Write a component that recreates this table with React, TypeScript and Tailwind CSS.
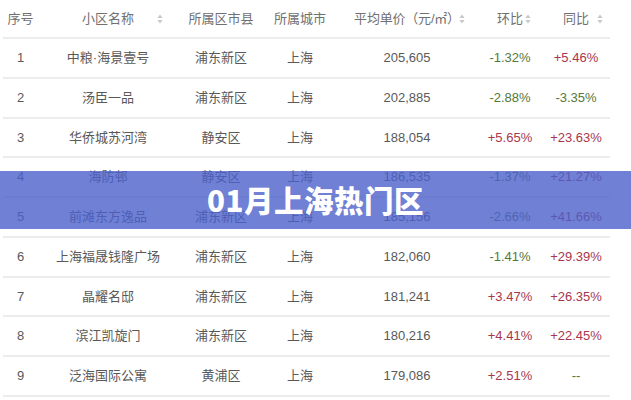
import React from "react";

type Row = {
  n: number;
  name: string;
  district: string;
  city: string;
  price: string;
  mom: string;
  yoy: string;
};

const rows: Row[] = [
  { n: 1, name: "中粮·海景壹号", district: "浦东新区", city: "上海", price: "205,605", mom: "-1.32%", yoy: "+5.46%" },
  { n: 2, name: "汤臣一品", district: "浦东新区", city: "上海", price: "202,885", mom: "-2.88%", yoy: "-3.35%" },
  { n: 3, name: "华侨城苏河湾", district: "静安区", city: "上海", price: "188,054", mom: "+5.65%", yoy: "+23.63%" },
  { n: 4, name: "海防邨", district: "静安区", city: "上海", price: "186,535", mom: "-1.37%", yoy: "+21.27%" },
  { n: 5, name: "前滩东方逸品", district: "浦东新区", city: "上海", price: "185,156", mom: "-2.66%", yoy: "+41.66%" },
  { n: 6, name: "上海福晟钱隆广场", district: "浦东新区", city: "上海", price: "182,060", mom: "-1.41%", yoy: "+29.39%" },
  { n: 7, name: "晶耀名邸", district: "浦东新区", city: "上海", price: "181,241", mom: "+3.47%", yoy: "+26.35%" },
  { n: 8, name: "滨江凯旋门", district: "浦东新区", city: "上海", price: "180,216", mom: "+4.41%", yoy: "+22.45%" },
  { n: 9, name: "泛海国际公寓", district: "黄浦区", city: "上海", price: "179,086", mom: "+2.51%", yoy: "--" },
];

const grid = "grid grid-cols-[35px_140px_86px_72px_142px_64px_68px]";

function Sort() {
  return (
    <svg width="6" height="10" viewBox="0 0 6 10" className="absolute top-1/2 -translate-y-1/2">
      <path d="M3 0.5 L5.6 4 L0.4 4 Z" fill="#c8c8c8" />
      <path d="M3 9.5 L5.6 6 L0.4 6 Z" fill="#c8c8c8" />
    </svg>
  );
}

function colorOf(v: string) {
  if (v.startsWith("+")) return "text-[#a8364e]";
  if (v.startsWith("-")) return "text-[#53783a]";
  return "text-[#666]";
}

export default function App() {
  return (
    <div
      className="relative w-[631px] h-[400px] overflow-hidden bg-white text-[13px]"
      style={{ fontFamily: '"Liberation Sans", "Noto Sans CJK SC", sans-serif' }}
    >
      <div className="ml-[3px] w-[607px]">
        <div className={`${grid} h-[39px] items-center border-b-2 border-[#ececec] text-[#707070]`}>
          <div className="text-center">序号</div>
          <div className="relative h-full flex items-center justify-center">
            小区名称
            <span className="absolute left-[119px] top-1/2">
              <Sort />
            </span>
          </div>
          <div className="text-center">所属区市县</div>
          <div className="text-center">所属城市</div>
          <div className="relative h-full flex items-center justify-center">
            <span className="tracking-[-0.2px]">平均单价（元/㎡）</span>
            <span className="absolute left-[123px] top-1/2">
              <Sort />
            </span>
          </div>
          <div className="relative h-full flex items-center justify-center">
            环比
            <span className="absolute left-[47px] top-1/2">
              <Sort />
            </span>
          </div>
          <div className="relative h-full flex items-center justify-center">
            同比
            <span className="absolute left-[55px] top-1/2">
              <Sort />
            </span>
          </div>
        </div>
        {rows.map((r) => (
          <div
            key={r.n}
            className={`${grid} h-[39.75px] items-center border-b-2 border-[#ececec] text-[#595959]`}
          >
            <div className="text-center">{r.n}</div>
            <div className="text-center whitespace-nowrap">{r.name}</div>
            <div className="text-center">{r.district}</div>
            <div className="text-center">{r.city}</div>
            <div className="text-center">{r.price}</div>
            <div className={`text-center ${colorOf(r.mom)}`}>{r.mom}</div>
            <div className={`text-center ${colorOf(r.yoy)}`}>{r.yoy}</div>
          </div>
        ))}
      </div>

      <div className="absolute left-0 right-0 top-[171px] h-[58px] bg-[#4b60ca]/80 flex items-center justify-center">
        <span
          className="text-white font-black text-[29.5px] leading-none tracking-[0.5px]"
          style={{ fontFamily: '"Noto Sans CJK SC", "Noto Sans", sans-serif' }}
        >
          01月上海热门区
        </span>
      </div>
    </div>
  );
}
